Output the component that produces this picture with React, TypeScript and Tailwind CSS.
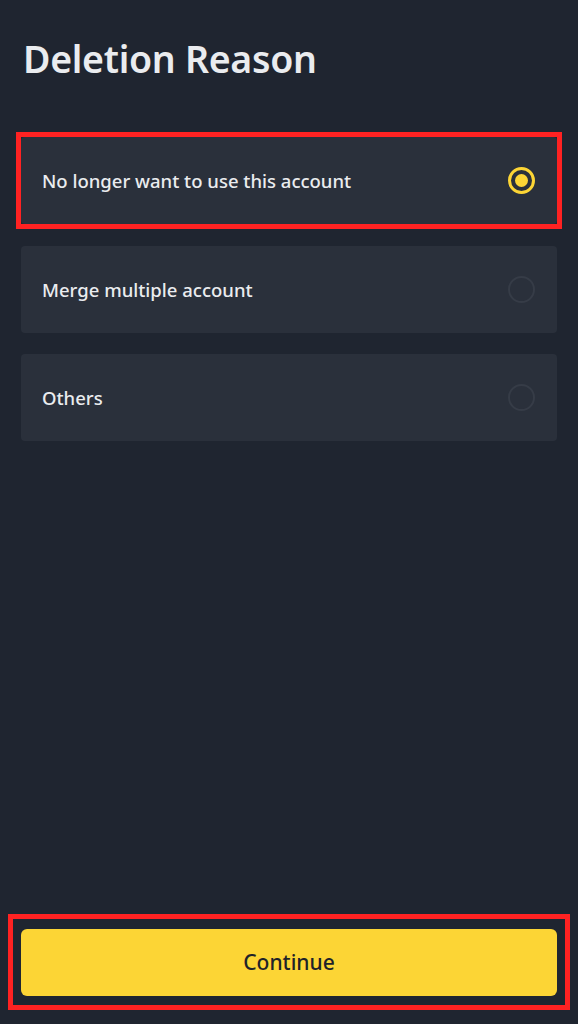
import React, { useState } from 'react';

const reasons = [
  'No longer want to use this account',
  'Merge multiple account',
  'Others',
];

function Radio({ checked }: { checked: boolean }) {
  if (checked) {
    return (
      <div className="w-[27px] h-[27px] rounded-full border-[3px] border-[#fcd535] flex items-center justify-center">
        <div className="w-[13px] h-[13px] rounded-full bg-[#fcd535]" />
      </div>
    );
  }
  return <div className="w-[27px] h-[27px] rounded-full border-2 border-[#363c47]" />;
}

export default function App() {
  const [selected, setSelected] = useState(0);

  return (
    <div
      className="h-screen flex flex-col bg-[#1f2530] text-[#eaecef]"
      style={{ fontFamily: '"Noto Sans", "Open Sans", sans-serif' }}
    >
      <div className="px-[21px]">
        <h1 className="mt-[33px] ml-[2px] text-[37.5px] leading-[52px] font-semibold tracking-[-0.3px]">
          Deletion Reason
        </h1>

        <div className="mt-[52px] flex flex-col gap-[21px]">
          {reasons.map((reason, index) => {
            const card = (
              <button
                onClick={() => setSelected(index)}
                className="w-full h-[87px] rounded-[4px] bg-[#2a303b] flex items-center justify-between pl-[21px] pr-[22px] text-left"
              >
                <span className="text-[18.5px] font-medium">{reason}</span>
                <Radio checked={selected === index} />
              </button>
            );
            // the highlighted option sits in a red callout frame
            return index === 0 ? (
              <div key={index} className="-mx-[5px] -mt-[5px] -mb-[4px] border-[5px] border-[#ff2222]">
                {card}
              </div>
            ) : (
              <div key={index}>{card}</div>
            );
          })}
        </div>
      </div>

      <div className="flex-1" />

      <div className="mx-[8px] mb-[14px] border-[5px] border-[#ff2222] px-[8px] pt-[10px] pb-[9px]">
        <button className="w-full h-[67px] rounded-[6px] bg-[#fcd535] text-[#1e2329] text-[21px] font-medium">
          Continue
        </button>
      </div>
    </div>
  );
}
